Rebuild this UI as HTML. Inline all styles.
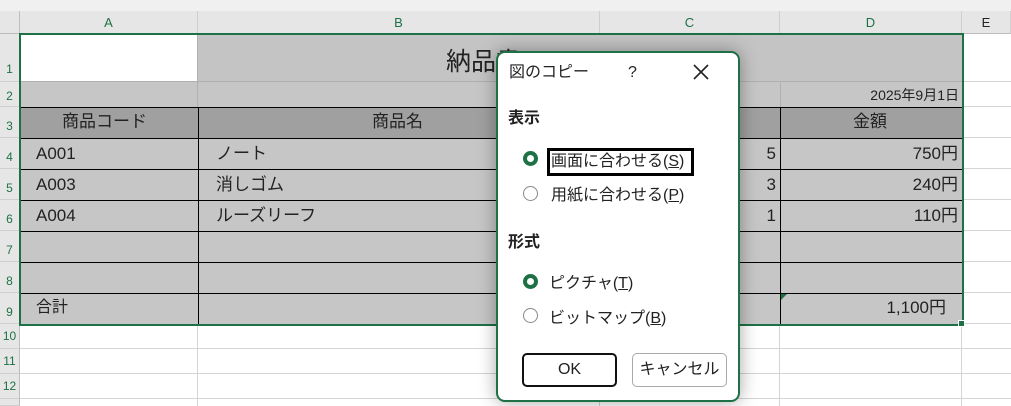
<!DOCTYPE html>
<html><head><meta charset="utf-8"><style>
*{margin:0;padding:0;box-sizing:border-box}
body{width:1011px;height:406px;overflow:hidden;background:#fff;position:relative;font-family:"Liberation Sans","Noto Sans CJK JP",sans-serif;color:#222}
.a{position:absolute}
.ch{top:11px;height:23px;background:#e6e6e6;border-right:1px solid #cfcfcf;border-bottom:1px solid #bdbdbd;text-align:center;font-size:13px;line-height:23px;color:#1e7145}
.rh{left:0;width:20px;background:#e6e6e6;border-bottom:1px solid #cfcfcf;border-right:1px solid #bdbdbd;font-size:12px;color:#1e7145;text-align:center}
.hl{height:1px;background:#d4d4d4;left:20px;right:0}
.vl{width:1px;background:#d4d4d4;top:34px;bottom:0}
.bl{background:#000}
.t{font-size:17px;color:#222;white-space:nowrap;line-height:24px;height:24px}
.r{text-align:right}
.dl{font-size:16px;white-space:nowrap;color:#222;line-height:22px}
.rad{width:15px;height:15px;border-radius:50%;border:1.5px solid #888;background:#fff}
.rad.on{border:4px solid #1e7145}
</style></head><body>
<div class="a" style="left:0;top:0;width:1011px;height:11px;background:#f0f0f0"></div>
<div class="a" style="left:0;top:11px;width:20px;height:23px;background:#e6e6e6;border-right:1px solid #bdbdbd;border-bottom:1px solid #bdbdbd"></div>
<div class="a ch" style="left:20px;width:178px">A</div>
<div class="a ch" style="left:198px;width:402px">B</div>
<div class="a ch" style="left:600px;width:180px">C</div>
<div class="a ch" style="left:780px;width:182px">D</div>
<div class="a ch" style="left:962px;width:49px;color:#222">E</div>
<div class="a rh" style="top:34px;height:48px;line-height:70px">1</div>
<div class="a rh" style="top:82px;height:25px;line-height:28px">2</div>
<div class="a rh" style="top:107px;height:31px;line-height:38px">3</div>
<div class="a rh" style="top:138px;height:31px;line-height:38px">4</div>
<div class="a rh" style="top:169px;height:31px;line-height:38px">5</div>
<div class="a rh" style="top:200px;height:31px;line-height:38px">6</div>
<div class="a rh" style="top:231px;height:31px;line-height:38px">7</div>
<div class="a rh" style="top:262px;height:31px;line-height:38px">8</div>
<div class="a rh" style="top:293px;height:31px;line-height:38px">9</div>
<div class="a rh" style="top:324px;height:25px;line-height:25px">10</div>
<div class="a rh" style="top:349px;height:25px;line-height:25px">11</div>
<div class="a rh" style="top:374px;height:25px;line-height:25px">12</div>
<div class="a rh" style="top:399px;height:7px"></div>
<div class="a hl" style="top:81px"></div><div class="a hl" style="top:106px"></div><div class="a hl" style="top:137px"></div>
<div class="a hl" style="top:168px"></div><div class="a hl" style="top:199px"></div><div class="a hl" style="top:230px"></div>
<div class="a hl" style="top:261px"></div><div class="a hl" style="top:292px"></div><div class="a hl" style="top:323px"></div>
<div class="a hl" style="top:348px"></div><div class="a hl" style="top:373px"></div><div class="a hl" style="top:398px"></div>
<div class="a vl" style="left:197px"></div><div class="a vl" style="left:599px"></div><div class="a vl" style="left:779px"></div><div class="a vl" style="left:961px"></div>
<div class="a" style="left:20px;top:34px;width:942px;height:290px;background:#c6c6c6"></div>
<div class="a" style="left:20px;top:34px;width:178px;height:48px;background:#fff"></div>
<div class="a" style="left:198px;top:34px;width:764px;height:48px;background:#c4c4c4"></div>
<div class="a" style="left:20px;top:81px;width:942px;height:1px;background:#b0b0b0"></div>
<div class="a" style="left:20px;top:107px;width:942px;height:31px;background:#a0a0a0"></div>
<div class="a" style="left:197px;top:34px;width:1px;height:73px;background:#b0b0b0"></div>
<div class="a" style="left:780px;top:82px;width:1px;height:25px;background:#b0b0b0"></div>
<div class="a bl" style="left:20px;top:107px;width:942px;height:1px"></div>
<div class="a bl" style="left:20px;top:138px;width:942px;height:1px"></div>
<div class="a bl" style="left:20px;top:169px;width:942px;height:1px"></div>
<div class="a bl" style="left:20px;top:200px;width:942px;height:1px"></div>
<div class="a bl" style="left:20px;top:231px;width:942px;height:1px"></div>
<div class="a bl" style="left:20px;top:262px;width:942px;height:1px"></div>
<div class="a bl" style="left:20px;top:293px;width:942px;height:1px"></div>
<div class="a bl" style="left:198px;top:107px;width:1px;height:217px"></div>
<div class="a bl" style="left:780px;top:107px;width:1px;height:217px"></div>
<div class="a" style="left:446px;top:42px;font-size:25px;color:#222">納品書</div>
<div class="a r" style="left:800px;width:159px;top:85px;font-size:14px;line-height:20px">2025年9月1日</div>
<div class="a t" style="left:62px;top:110px">商品コード</div>
<div class="a t" style="left:372px;top:110px">商品名</div>
<div class="a t" style="left:853px;top:110px">金額</div>
<div class="a t" style="left:36px;top:142px">A001</div>
<div class="a t" style="left:36px;top:173px">A003</div>
<div class="a t" style="left:36px;top:204px">A004</div>
<div class="a t" style="left:216px;top:142px">ノート</div>
<div class="a t" style="left:216px;top:173px">消しゴム</div>
<div class="a t" style="left:216px;top:204px">ルーズリーフ</div>
<div class="a t r" style="left:700px;width:76px;top:142px">5</div>
<div class="a t r" style="left:700px;width:76px;top:173px">3</div>
<div class="a t r" style="left:700px;width:76px;top:204px">1</div>
<div class="a t r" style="left:800px;width:158px;top:142px">750円</div>
<div class="a t r" style="left:800px;width:158px;top:173px">240円</div>
<div class="a t r" style="left:800px;width:158px;top:204px">110円</div>
<div class="a t" style="left:36px;top:296px;font-size:16px">合計</div>
<div class="a t r" style="left:800px;width:146px;top:296px">1,100円</div>
<div class="a" style="left:781px;top:294px;width:0;height:0;border-top:6px solid #1e7145;border-right:6px solid transparent"></div>
<div class="a" style="left:19px;top:33px;width:945px;height:293px;border:2px solid #1e7145"></div>
<div class="a" style="left:958px;top:320px;width:7px;height:7px;background:#1e7145;border:1px solid #fff"></div>
<div class="a" style="left:496px;top:51px;width:244px;height:351px;background:#fff;border:2px solid #1e7145;border-radius:9px;box-shadow:0 0 18px rgba(0,0,0,.35)"></div>
<div class="a dl" style="left:509px;top:62px">図のコピー</div>
<div class="a dl" style="left:628px;top:62px">?</div>
<svg class="a" style="left:693px;top:64px" width="16" height="16"><path d="M1 1L15 15M15 1L1 15" stroke="#222" stroke-width="1.6"/></svg>
<div class="a dl" style="left:508px;top:108px;font-weight:bold">表示</div>
<div class="a rad on" style="left:523px;top:151px"></div>
<div class="a" style="left:547px;top:148px;width:147px;height:28px;border:3px solid #000"></div>
<div class="a dl" style="left:551px;top:151px">画面に合わせる(<u>S</u>)</div>
<div class="a rad" style="left:523px;top:186px"></div>
<div class="a dl" style="left:551px;top:185px">用紙に合わせる(<u>P</u>)</div>
<div class="a dl" style="left:508px;top:232px;font-weight:bold">形式</div>
<div class="a rad on" style="left:523px;top:274px"></div>
<div class="a dl" style="left:549px;top:273px">ピクチャ(<u>T</u>)</div>
<div class="a rad" style="left:523px;top:308px"></div>
<div class="a dl" style="left:549px;top:308px">ビットマップ(<u>B</u>)</div>
<div class="a" style="left:522px;top:353px;width:95px;height:34px;border:2px solid #111;border-radius:5px;font-size:16px;text-align:center;line-height:30px">OK</div>
<div class="a" style="left:632px;top:353px;width:95px;height:34px;border:1px solid #aaa;border-radius:5px;font-size:16px;text-align:center;line-height:32px">キャンセル</div>
</body></html>
